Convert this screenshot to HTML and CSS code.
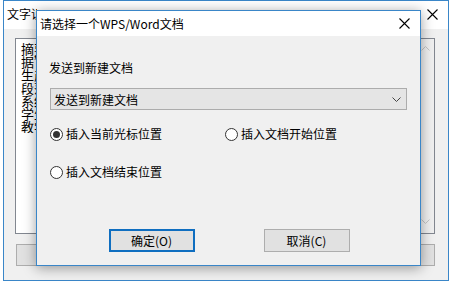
FILE: index.html
```html
<!DOCTYPE html>
<html lang="zh-CN">
<head>
<meta charset="utf-8">
<title>请选择一个WPS/Word文档</title>
<link rel="stylesheet" href="styles.css">
</head>
<body>
<div class="desktop">
  <div class="win back">
    <div class="titlebar">
      <span class="title back-title">文字识别结果</span>
      <svg class="close" width="11" height="11" viewBox="0 0 11 11"><path d="M0.5 0.5L10.5 10.5M10.5 0.5L0.5 10.5" stroke="#000" stroke-width="1.1" fill="none"/></svg>
    </div>
    <div class="back-body">
      <div class="textarea">
        <div class="lines">
          <div>摘要</div>
          <div>据”</div>
          <div>生产</div>
          <div>段落</div>
          <div>系统</div>
          <div>学生</div>
          <div>教学</div>
        </div>
        <div class="scroll">
          <svg width="9" height="5" viewBox="0 0 9 5"><path d="M0.5 4.5L4.5 0.5L8.5 4.5" stroke="#c4c4c4" fill="none"/></svg>
          <svg width="9" height="5" viewBox="0 0 9 5"><path d="M0.5 0.5L4.5 4.5L8.5 0.5" stroke="#c4c4c4" fill="none"/></svg>
        </div>
      </div>
      <div class="back-buttons">
        <div class="bbtn wide"></div>
        <div class="bbtn wide default"></div>
        <div class="bbtn narrow"></div>
      </div>
    </div>
  </div>

  <div class="win dialog">
    <div class="titlebar dlg-title">
      <span class="title">请选择一个WPS/Word文档</span>
      <svg class="close" width="11" height="11" viewBox="0 0 11 11"><path d="M0.5 0.5L10.5 10.5M10.5 0.5L0.5 10.5" stroke="#000" stroke-width="1.1" fill="none"/></svg>
    </div>
    <div class="dlg-body">
      <div class="label">发送到新建文档</div>
      <div class="combo">
        <span>发送到新建文档</span>
        <svg width="9" height="5" viewBox="0 0 9 5"><path d="M0.5 0.5L4.5 4.5L8.5 0.5" stroke="#444" fill="none"/></svg>
      </div>
      <div class="radios">
        <div class="radio checked"><span class="dot"></span>插入当前光标位置</div>
        <div class="radio"><span class="dot"></span>插入文档开始位置</div>
        <div class="radio row2"><span class="dot"></span>插入文档结束位置</div>
      </div>
      <div class="buttons">
        <div class="btn primary">确定(O)</div>
        <div class="btn">取消(C)</div>
      </div>
    </div>
  </div>
</div>
</body>
</html>
```

FILE: styles.css
```css
* { box-sizing: border-box; }
html, body {
  margin: 0;
  padding: 0;
  width: 451px;
  height: 283px;
  overflow: hidden;
  background: #f0f0f0;
  font-family: "Noto Sans CJK SC", "Microsoft YaHei", sans-serif;
  font-size: 12px;
  color: #000;
}
.desktop {
  position: relative;
  width: 451px;
  height: 283px;
  background: #ffffff;
}
.win {
  position: absolute;
  border: 1px solid #3a86c8;
  background: #f0f0f0;
  display: flex;
  flex-direction: column;
}
.back {
  left: 3px;
  top: 0;
  width: 446px;
  height: 281px;
}
.titlebar {
  background: #fff;
  display: flex;
  align-items: center;
  justify-content: space-between;
  flex: none;
}
.back .titlebar {
  height: 28px;
  padding: 0 10px 2px 3px;
}
.title { line-height: 16px; white-space: nowrap; }
.back-title {
  width: 30px;
  overflow: hidden;
}
.back-body {
  flex: 1;
  padding: 9px 13px 0 11px;
  display: flex;
  flex-direction: column;
}
.textarea {
  height: 196px;
  background: #fff;
  border: 1px solid #828790;
  display: flex;
  justify-content: space-between;
}
.lines {
  margin: 3px 0 0 5px;
  width: 15px;
  font-size: 13px;
  line-height: 13px;
  white-space: nowrap;
  overflow: hidden;
  align-self: flex-start;
}
.scroll {
  width: 17px;
  background: #f0f0f0;
  display: flex;
  flex-direction: column;
  justify-content: space-between;
  align-items: center;
  padding: 7px 0 9px;
}
.back-buttons {
  margin-top: 10px;
  display: flex;
  gap: 35px;
  padding-left: 1px;
}
.bbtn {
  height: 22px;
  background: #e1e1e1;
  border: 1px solid #adadad;
}
.bbtn.wide { width: 133px; }
.bbtn.narrow { width: 86px; }
.bbtn.default { border: 2px solid #0f6ec0; }

.dialog {
  left: 36px;
  top: 10px;
  width: 385px;
  height: 256px;
  box-shadow: 0 2px 12px rgba(0, 0, 0, 0.38);
}
.dlg-title {
  height: 25px;
  padding: 0 10px 0 3px;
}
.dlg-body {
  flex: 1;
  padding: 0 13px 0 12px;
  display: flex;
  flex-direction: column;
}
.label {
  margin-top: 24px;
  line-height: 16px;
}
.combo {
  margin-top: 12px;
  margin-left: 1px;
  height: 22px;
  background: #e5e5e5;
  border: 1px solid #acacac;
  display: flex;
  align-items: center;
  justify-content: space-between;
  padding: 0 5px 0 3px;
}
.radios {
  margin-top: 16px;
  display: grid;
  grid-template-columns: 175px 1fr;
  row-gap: 22px;
  padding-left: 1px;
}
.radio {
  display: flex;
  align-items: center;
  line-height: 16px;
  gap: 3px;
}
.row2 { grid-column: 1; }
.dot {
  width: 13px;
  height: 13px;
  border-radius: 50%;
  border: 1px solid #333;
  background: #fff;
  display: flex;
  align-items: center;
  justify-content: center;
}
.radio.checked .dot::after {
  content: "";
  width: 7px;
  height: 7px;
  border-radius: 50%;
  background: #333;
}
.buttons {
  margin-top: 49px;
  display: flex;
  justify-content: center;
  gap: 69px;
  padding-left: 2px;
}
.btn {
  width: 86px;
  height: 23px;
  background: #e1e1e1;
  border: 1px solid #adadad;
  display: flex;
  align-items: center;
  justify-content: center;
}
.btn.primary { border: 2px solid #0f6ec0; }
```
